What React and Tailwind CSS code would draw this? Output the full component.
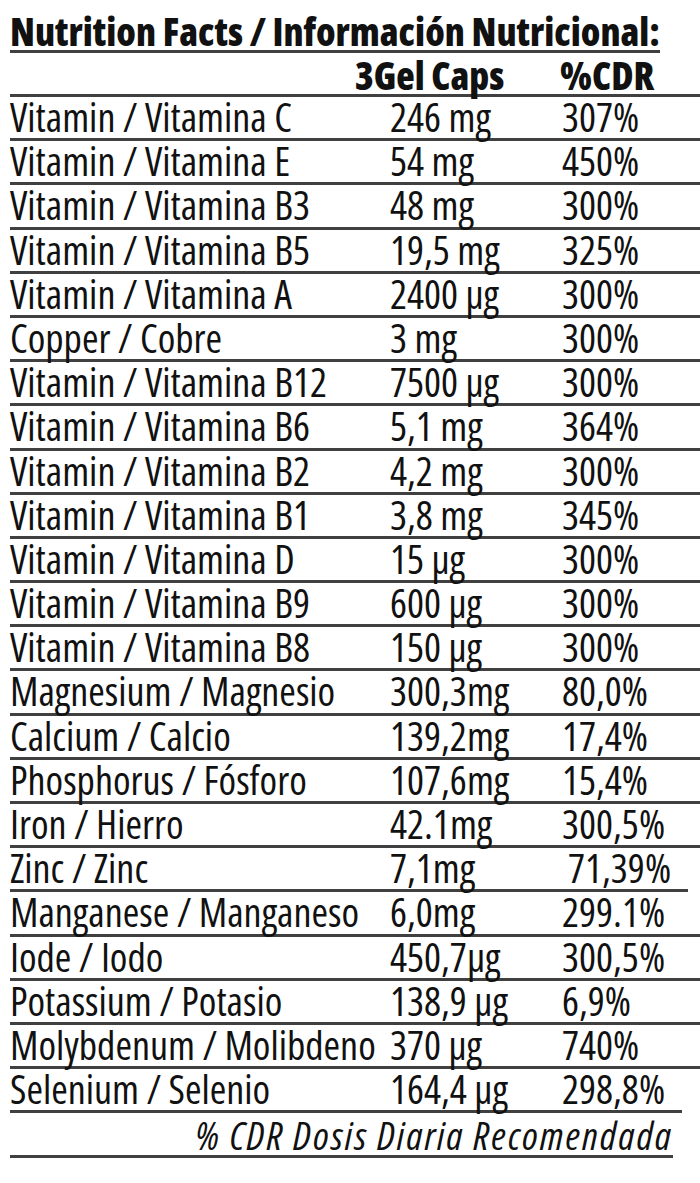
const rows = [
  ["Vitamin / Vitamina C", "246 mg", "307%"],
  ["Vitamin / Vitamina E", "54 mg", "450%"],
  ["Vitamin / Vitamina B3", "48 mg", "300%"],
  ["Vitamin / Vitamina B5", "19,5 mg", "325%"],
  ["Vitamin / Vitamina A", "2400 µg", "300%"],
  ["Copper / Cobre", "3 mg", "300%"],
  ["Vitamin / Vitamina B12", "7500 µg", "300%"],
  ["Vitamin / Vitamina B6", "5,1 mg", "364%"],
  ["Vitamin / Vitamina B2", "4,2 mg", "300%"],
  ["Vitamin / Vitamina B1", "3,8 mg", "345%"],
  ["Vitamin / Vitamina D", "15 µg", "300%"],
  ["Vitamin / Vitamina B9", "600 µg", "300%"],
  ["Vitamin / Vitamina B8", "150 µg", "300%"],
  ["Magnesium / Magnesio", "300,3mg", "80,0%"],
  ["Calcium / Calcio", "139,2mg", "17,4%"],
  ["Phosphorus / Fósforo", "107,6mg", "15,4%"],
  ["Iron / Hierro", "42.1mg", "300,5%"],
  ["Zinc / Zinc", "7,1mg", "71,39%", "short"],
  ["Manganese / Manganeso", "6,0mg", "299.1%"],
  ["Iode / Iodo", "450,7µg", "300,5%"],
  ["Potassium / Potasio", "138,9 µg", "6,9%"],
  ["Molybdenum / Molibdeno", "370 µg", "740%"],
  ["Selenium / Selenio", "164,4 µg", "298,8%", "shorter"],
];

function Row({ name, amount, pct, end }) {
  // a couple of the underlines stop short of the right edge
  const width =
    end === "short" ? "w-[678px]" : end === "shorter" ? "w-[672px]" : "w-[690px]";
  return (
    <div
      className={`${width} h-[44.2px] grid grid-cols-[380px_172px_1fr] whitespace-nowrap border-b-[3px] border-[#404040]`}
    >
      <span>{name}</span>
      <span>{amount}</span>
      <span className={end === "short" ? "pl-[6px]" : ""}>{pct}</span>
    </div>
  );
}

export default function App() {
  return (
    <div className="w-[700px] h-[1183px] bg-white pl-[10px] text-[#111] font-['Open_Sans',sans-serif] [font-stretch:75%] overflow-hidden">
      <div className="pt-[12px]">
        <h1 className="inline-block text-[38px] font-extrabold leading-[38px] [font-stretch:82%] whitespace-nowrap border-b-[3px] border-[#404040]">
          Nutrition Facts / Información Nutricional:
        </h1>
      </div>

      <div className="w-[690px] h-[44px] flex items-start pt-[3px] border-b-[3px] border-[#404040] text-[38px] font-extrabold leading-[38px] [font-stretch:82%]">
        <span className="w-[345px]" />
        <span className="w-[205px]">3Gel Caps</span>
        <span>%CDR</span>
      </div>

      <div className="text-[40px] leading-[39px]">
        {rows.map(([n, a, p, e]) => (
          <Row key={n} name={n} amount={a} pct={p} end={e} />
        ))}
      </div>

      <div className="w-[663px] h-[45px] flex items-start justify-end pt-[3px] border-b-[3px] border-[#404040]">
        <span className="italic text-[39px] leading-[38px] tracking-[2px] whitespace-nowrap">
          % CDR Dosis Diaria Recomendada
        </span>
      </div>
    </div>
  );
}
